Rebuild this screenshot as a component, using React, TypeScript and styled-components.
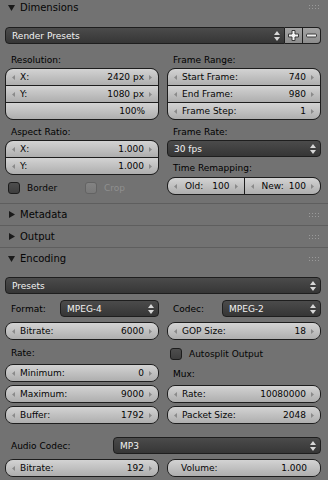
import React from "react";
import styled, { createGlobalStyle } from "styled-components";

const GlobalStyle = createGlobalStyle`
  html, body {
    margin: 0;
    padding: 0;
    background: #727272;
  }
  body {
    font-family: "DejaVu Sans", "Liberation Sans", sans-serif;
    font-size: 9px;
    color: #000;
    overflow: hidden;
  }
  * {
    box-sizing: border-box;
  }
`;

const Page = styled.div`
  width: 328px;
  height: 480px;
  overflow: hidden;
  background: #727272;
  display: flex;
  flex-direction: column;
`;

const Header = styled.div<{ $first?: boolean }>`
  height: ${(p) => (p.$first ? 18 : 22)}px;
  padding: 0 9px ${(p) => (p.$first ? 4 : 0)}px 8px;
  border-top: ${(p) => (p.$first ? "none" : "1px solid #5e5e5e")};
  display: flex;
  align-items: center;
  font-size: 10px;
  color: #050505;
  flex-shrink: 0;
`;

const HeaderTitle = styled.span`
  margin-left: 5px;
  flex: 1;
`;

const Body = styled.div<{ $pt: number }>`
  padding: ${(p) => p.$pt}px 7px 7px 5px;
  display: flex;
  flex-direction: column;
  flex-shrink: 0;
`;

const Columns = styled.div<{ $mt?: number }>`
  display: grid;
  grid-template-columns: 1fr 1fr;
  column-gap: 8px;
  margin-top: ${(p) => p.$mt ?? 0}px;
  align-items: start;
`;

const Col = styled.div`
  display: flex;
  flex-direction: column;
  min-width: 0;
`;

const Label = styled.div<{ $mt?: number }>`
  height: 16px;
  flex-shrink: 0;
  margin-top: ${(p) => p.$mt ?? 0}px;
  padding-left: 6px;
  display: flex;
  align-items: center;
  white-space: nowrap;
`;

const Stack = styled.div<{ $mt?: number; $row?: boolean }>`
  margin-top: ${(p) => p.$mt ?? 0}px;
  display: flex;
  flex-direction: ${(p) => (p.$row ? "row" : "column")};
  flex-shrink: 0;
  border: 1px solid #1d1d1d;
  border-radius: 8px;
  overflow: hidden;
  background: #1d1d1d;
  gap: 1px;

  & > * {
    flex: ${(p) => (p.$row ? "1 1 0" : "0 0 auto")};
  }
`;

const Cell = styled.div<{ $slider?: boolean }>`
  height: 16px;
  min-width: 0;
  display: flex;
  align-items: center;
  padding: 0 ${(p) => (p.$slider ? 13 : 6)}px;
  background: linear-gradient(#d3d3d3, #aeaeae);
  white-space: nowrap;
  color: #050505;
`;

const CellLabel = styled.span<{ $gap?: number }>`
  margin-left: ${(p) => p.$gap ?? 5}px;
  flex: 1;
`;

const CellValue = styled.span`
  margin-right: 5px;
`;

const Menu = styled.div<{ $joined?: boolean }>`
  height: 17px;
  flex: 1 0 auto;
  min-width: 0;
  display: flex;
  align-items: center;
  padding: 0 4px 0 6px;
  color: #f2f2f2;
  background: linear-gradient(#4b4b4b, #363636);
  border: 1px solid #1e1e1e;
  border-radius: ${(p) => (p.$joined ? "4px 0 0 4px" : "4px")};
  white-space: nowrap;
`;

const MenuText = styled.span`
  flex: 1;
`;

const PresetRow = styled.div`
  display: flex;
`;

const IconBtn = styled.div<{ $last?: boolean }>`
  width: 18px;
  height: 17px;
  flex-shrink: 0;
  display: flex;
  align-items: center;
  justify-content: center;
  background: linear-gradient(#a3a3a3, #8d8d8d);
  border: 1px solid #1e1e1e;
  border-left: none;
  border-radius: ${(p) => (p.$last ? "0 4px 4px 0" : "0")};
`;

const Pair = styled.div<{ $mt?: number; $labelWidth: number }>`
  display: grid;
  grid-template-columns: ${(p) => p.$labelWidth}px 1fr;
  align-items: center;
  margin-top: ${(p) => p.$mt ?? 0}px;
`;

const PairLabel = styled.span`
  padding-left: 6px;
  white-space: nowrap;
`;

const CheckRow = styled.div<{ $mt?: number }>`
  height: 17px;
  flex-shrink: 0;
  margin-top: ${(p) => p.$mt ?? 0}px;
  display: flex;
  align-items: center;
`;

const CheckItem = styled.div<{ $disabled?: boolean; $wide?: boolean }>`
  width: ${(p) => (p.$wide ? "auto" : "80px")};
  display: flex;
  align-items: center;
  color: ${(p) => (p.$disabled ? "#8f8f8f" : "#050505")};
  white-space: nowrap;
`;

const Box = styled.span<{ $disabled?: boolean }>`
  width: 12px;
  height: 12px;
  margin: 0 7px 0 3px;
  border-radius: 3px;
  border: 1px solid ${(p) => (p.$disabled ? "#636363" : "#1c1c1c")};
  background: ${(p) =>
    p.$disabled ? "linear-gradient(#838383, #797979)" : "linear-gradient(#4e4e4e, #3e3e3e)"};
`;

const Arrow = ({ right }: { right?: boolean }) => (
  <svg width="3" height="5" viewBox="0 0 3 5">
    <polygon points={right ? "0,0 3,2.5 0,5" : "3,0 0,2.5 3,5"} fill="#8a8a8a" />
  </svg>
);

const UpDown = () => (
  <svg width="6" height="10" viewBox="0 0 6 10">
    <polygon points="0,4 3,0 6,4" fill="#d8d8d8" />
    <polygon points="0,6 3,10 6,6" fill="#d8d8d8" />
  </svg>
);

const Tri = ({ open }: { open?: boolean }) =>
  open ? (
    <svg width="7" height="7" viewBox="0 0 7 7">
      <polygon points="0,1 7,1 3.5,7" fill="#1a1a1a" />
    </svg>
  ) : (
    <svg width="7" height="7" viewBox="0 0 7 7">
      <polygon points="1,0 7,3.5 1,7" fill="#1a1a1a" />
    </svg>
  );

const Grip = () => (
  <svg width="10" height="4" viewBox="0 0 10 4">
    {[0, 3, 6, 9].map((x) => (
      <g key={x}>
        <rect x={x} y={0} width="1" height="1" fill="#9a9a9a" />
        <rect x={x} y={3} width="1" height="1" fill="#9a9a9a" />
      </g>
    ))}
  </svg>
);

const Plus = () => (
  <svg width="11" height="11" viewBox="0 0 11 11">
    <polygon
      points="4,0.5 7,0.5 7,4 10.5,4 10.5,7 7,7 7,10.5 4,10.5 4,7 0.5,7 0.5,4 4,4"
      fill="#f4f4f4"
      stroke="#3a3a3a"
      strokeWidth="1"
    />
  </svg>
);

const Minus = () => (
  <svg width="11" height="11" viewBox="0 0 11 11">
    <rect x="0.5" y="4" width="10" height="3" rx="1" fill="#f0f0f0" stroke="#3a3a3a" strokeWidth="1" />
  </svg>
);

const Num = ({ label, value, gap }: { label: string; value: string; gap?: number }) => (
  <Cell>
    <Arrow />
    <CellLabel $gap={gap}>{label}</CellLabel>
    <CellValue>{value}</CellValue>
    <Arrow right />
  </Cell>
);

const Slider = ({ label, value }: { label?: string; value: string }) => (
  <Cell $slider>
    <CellLabel $gap={0}>{label}</CellLabel>
    <span>{value}</span>
  </Cell>
);

const Dropdown = ({ text, joined }: { text: string; joined?: boolean }) => (
  <Menu $joined={joined}>
    <MenuText>{text}</MenuText>
    <UpDown />
  </Menu>
);

const PanelHeader = ({ title, open, first }: { title: string; open?: boolean; first?: boolean }) => (
  <Header $first={first}>
    <Tri open={open} />
    <HeaderTitle>{title}</HeaderTitle>
    <Grip />
  </Header>
);

export default function App() {
  return (
    <Page>
      <GlobalStyle />
      <PanelHeader title="Dimensions" open first />
      <Body $pt={9}>
        <PresetRow>
          <Dropdown text="Render Presets" joined />
          <IconBtn>
            <Plus />
          </IconBtn>
          <IconBtn $last>
            <Minus />
          </IconBtn>
        </PresetRow>
        <Columns>
          <Col>
            <Label $mt={8}>Resolution:</Label>
            <Stack>
              <Num label="X:" value="2420 px" />
              <Num label="Y:" value="1080 px" />
              <Slider value="100%" />
            </Stack>
            <Label $mt={4}>Aspect Ratio:</Label>
            <Stack>
              <Num label="X:" value="1.000" />
              <Num label="Y:" value="1.000" />
            </Stack>
            <CheckRow $mt={4}>
              <CheckItem>
                <Box />
                Border
              </CheckItem>
              <CheckItem $disabled>
                <Box $disabled />
                Crop
              </CheckItem>
            </CheckRow>
          </Col>
          <Col>
            <Label $mt={8}>Frame Range:</Label>
            <Stack>
              <Num label="Start Frame:" value="740" />
              <Num label="End Frame:" value="980" />
              <Num label="Frame Step:" value="1" />
            </Stack>
            <Label $mt={4}>Frame Rate:</Label>
            <Dropdown text="30 fps" />
            <Label $mt={3}>Time Remapping:</Label>
            <Stack $row $mt={1}>
              <Num label="Old:" value="100" gap={8} />
              <Num label="New:" value="100" gap={8} />
            </Stack>
          </Col>
        </Columns>
      </Body>
      <PanelHeader title="Metadata" />
      <PanelHeader title="Output" />
      <PanelHeader title="Encoding" open />
      <Body $pt={8}>
        <Dropdown text="Presets" />
        <Columns $mt={6}>
          <Col>
            <Pair $labelWidth={55}>
              <PairLabel>Format:</PairLabel>
              <Dropdown text="MPEG-4" />
            </Pair>
            <Stack $mt={5}>
              <Num label="Bitrate:" value="6000" />
            </Stack>
            <Label $mt={5}>Rate:</Label>
            <Stack $mt={3}>
              <Num label="Minimum:" value="0" />
            </Stack>
            <Stack $mt={3}>
              <Num label="Maximum:" value="9000" />
            </Stack>
            <Stack $mt={3}>
              <Num label="Buffer:" value="1792" />
            </Stack>
          </Col>
          <Col>
            <Pair $labelWidth={55}>
              <PairLabel>Codec:</PairLabel>
              <Dropdown text="MPEG-2" />
            </Pair>
            <Stack $mt={5}>
              <Num label="GOP Size:" value="18" />
            </Stack>
            <CheckRow $mt={5}>
              <CheckItem $wide>
                <Box />
                Autosplit Output
              </CheckItem>
            </CheckRow>
            <Label $mt={4}>Mux:</Label>
            <Stack $mt={3}>
              <Num label="Rate:" value="10080000" />
            </Stack>
            <Stack $mt={3}>
              <Num label="Packet Size:" value="2048" />
            </Stack>
          </Col>
        </Columns>
        <Pair $labelWidth={108} $mt={13}>
          <PairLabel>Audio Codec:</PairLabel>
          <Dropdown text="MP3" />
        </Pair>
        <Columns $mt={5}>
          <Stack>
            <Num label="Bitrate:" value="192" />
          </Stack>
          <Stack>
            <Slider label="Volume:" value="1.000" />
          </Stack>
        </Columns>
      </Body>
    </Page>
  );
}
